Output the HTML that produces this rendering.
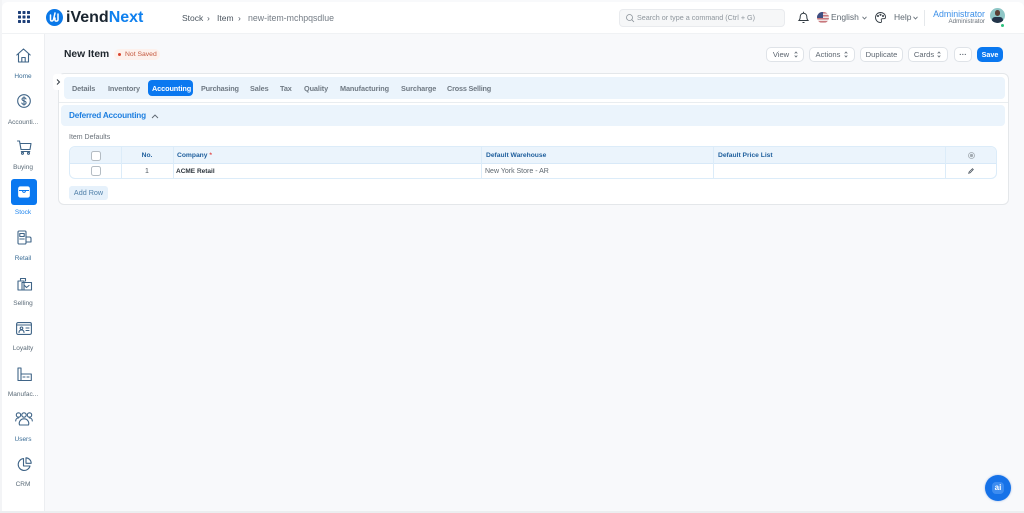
<!DOCTYPE html>
<html lang="en"><head><meta charset="utf-8"><title>New Item</title>
<style>
*{box-sizing:border-box}
html,body{margin:0;padding:0;width:1024px;height:513px;overflow:hidden;background:#f8f9fb;font-family:"Liberation Sans",sans-serif}
.a{position:absolute;white-space:nowrap}
.c{transform:translateX(-50%)}
.nav{color:#5b6b78;font-size:6.500px;line-height:9px;text-align:center;width:44px;left:1px}
.blue{color:#3b6d96}
svg{position:absolute;overflow:visible}
.ic{fill:none;stroke:#3f6487;stroke-width:1.100;stroke-linecap:round;stroke-linejoin:round}
.tab{top:83.500px;font-size:7.300px;letter-spacing:-.1px;line-height:10px;font-weight:700;color:#6f7983}
.btn{top:47px;height:15px;background:#fff;border:1px solid #dfe3e8;border-radius:5px;font-size:7.600px;line-height:13px;color:#5d6670;text-align:center}
.th{top:151px;font-size:6.700px;line-height:9px;font-weight:700;color:#1f5f9d}
.ln{background:#dcecf9}
.cb{width:10px;height:10px;border:1px solid #b4bcc3;border-radius:2.500px;background:#fff}
</style></head><body>

<!-- top bar -->
<div class="a" style="left:2px;top:2px;width:1022px;height:32px;background:#fff;border-radius:6px 6px 0 0;border-bottom:1px solid #f0f2f4"></div>
<svg style="left:18px;top:11px" width="12" height="12" fill="#1d3f78"><rect x="0" y="0" width="3" height="3" rx=".6"/><rect x="4.500" y="0" width="3" height="3" rx=".6"/><rect x="9" y="0" width="3" height="3" rx=".6"/><rect x="0" y="4.500" width="3" height="3" rx=".6"/><rect x="4.500" y="4.500" width="3" height="3" rx=".6"/><rect x="9" y="4.500" width="3" height="3" rx=".6"/><rect x="0" y="9" width="3" height="3" rx=".6"/><rect x="4.500" y="9" width="3" height="3" rx=".6"/><rect x="9" y="9" width="3" height="3" rx=".6"/></svg>
<svg style="left:46px;top:9px" width="17" height="17"><circle cx="8.500" cy="8.500" r="8.500" fill="#0a78e8"/><path d="M4.500 6v4.500c0 2 2.500 2 3 0l1.500-6.500M9 9v2c0 1.500 2.500 1.500 3 0V5" fill="none" stroke="#fff" stroke-width="1.500" stroke-linecap="round"/></svg>
<div class="a" style="left:66px;top:8px;font-size:16px;line-height:19px;font-weight:700;color:#1a2530">iVend<span style="color:#0f80ee">Next</span></div>
<div class="a" style="left:182px;top:13px;font-size:8.500px;line-height:10px;color:#4c5660">Stock</div>
<div class="a" style="left:207px;top:13px;font-size:8.500px;line-height:10px;color:#4c5660">&#8250;</div>
<div class="a" style="left:217px;top:13px;font-size:8.500px;line-height:10px;color:#4c5660">Item</div>
<div class="a" style="left:238px;top:13px;font-size:8.500px;line-height:10px;color:#4c5660">&#8250;</div>
<div class="a" style="left:248px;top:13px;font-size:8.800px;line-height:10px;color:#747c85">new-item-mchpqsdlue</div>

<div class="a" style="left:619px;top:9px;width:166px;height:18px;background:#f6f7f8;border:1px solid #e9ebee;border-radius:4px"></div>
<svg style="left:626px;top:14px" width="8" height="8" fill="none" stroke="#8b939a" stroke-width=".8"><circle cx="3.500" cy="3.500" r="3"/><path d="M5.800 5.800L8 8"/></svg>
<div class="a" style="left:637px;top:13px;font-size:7.200px;line-height:10px;color:#8d959c">Search or type a command (Ctrl + G)</div>
<svg style="left:798px;top:11px" width="11" height="13" fill="none" stroke="#333c44" stroke-width="1"><path d="M1 9.500c1-1 1.200-2 1.200-4a3.300 3.300 0 0 1 6.600 0c0 2 .2 3 1.200 4zM4.500 11.500h2M5.500 .8v1"/></svg>
<div class="a" style="left:817px;top:12px;width:12px;height:11px;border-radius:6px;background:repeating-linear-gradient(#c9777c 0 1.500px,#efe3e3 1.500px 3px);overflow:hidden"><div style="width:6px;height:5.500px;background:#3f4f82"></div></div>
<div class="a" style="left:831px;top:12px;font-size:8.500px;line-height:11px;color:#606a73">English</div>
<svg style="left:862px;top:16px" width="5" height="4" fill="none" stroke="#606a73" stroke-width=".8"><path d="M.5 .8L2.500 3L4.500 .8"/></svg>
<svg style="left:875px;top:12px" width="11" height="11" fill="none" stroke="#333c44" stroke-width=".9"><path d="M5.500 .5a5 5 0 1 0 0 10c1.500 0 1.200-1.500.8-2.200-.4-.9.300-1.600 1.200-1.600h1.600c1 0 1.400-.8 1.400-1.700 0-2.600-2.400-4.500-5-4.500z"/><circle cx="3" cy="4" r=".6"/><circle cx="5.500" cy="2.800" r=".6"/><circle cx="8" cy="4" r=".6"/></svg>
<div class="a" style="left:894px;top:12px;font-size:8.500px;line-height:11px;color:#606a73">Help</div>
<svg style="left:913px;top:16px" width="5" height="4" fill="none" stroke="#606a73" stroke-width=".8"><path d="M.5 .8L2.500 3L4.500 .8"/></svg>
<div class="a" style="left:924px;top:10px;width:1px;height:16px;background:#e5e8eb"></div>
<div class="a" style="right:39px;top:8.500px;font-size:8.800px;line-height:11px;color:#3b8fe8">Administrator</div>
<div class="a" style="right:39px;top:18px;font-size:6.200px;line-height:8px;color:#6a727a">Administrator</div>
<div class="a" style="left:990px;top:8px;width:15px;height:15px;border-radius:50%;background:#8fc6c6;overflow:hidden"><div style="position:absolute;left:5px;top:2px;width:5px;height:6px;border-radius:2.500px;background:#5b4036"></div><div style="position:absolute;left:2px;top:9px;width:11px;height:7px;border-radius:3px;background:#233449"></div></div>
<div class="a" style="left:1000px;top:23px;width:5px;height:5px;border-radius:50%;background:#2ec27e;border:.5px solid #fff"></div>

<!-- sidebar -->
<div class="a" style="left:2px;top:34px;width:43px;height:477px;background:#fff;border-right:1px solid #eceef1"></div>

<svg class="ic" style="left:16px;top:48px" width="15" height="15"><path d="M.8 7L7.500 1l6.700 6M2.500 5.800V14h10V5.800M5.800 14V9.500h3.400V14"/></svg>
<div class="a nav blue" style="top:72px">Home</div>
<svg class="ic" style="left:17px;top:94px" width="14" height="14"><circle cx="7" cy="7" r="6.300"/><path d="M9 5c-.3-1-1.100-1.300-2-1.300C5.800 3.700 5 4.300 5 5.200 5 7.300 9.100 6.500 9.100 8.800c0 1-1 1.600-2.100 1.600-1 0-1.900-.4-2.200-1.400M7 2.800v8.400" stroke-width="1"/></svg>
<div class="a nav" style="top:118px">Accounti...</div>
<svg class="ic" style="left:17px;top:140px" width="15" height="15"><path d="M.5 1h2l1.500 8.500h9l1-6H3M4.300 11.500h8.500"/><circle cx="5.500" cy="13.300" r="1"/><circle cx="11.500" cy="13.300" r="1"/></svg>
<div class="a nav" style="top:163px">Buying</div>
<div class="a" style="left:11px;top:179px;width:26px;height:26px;border-radius:3px;background:#0a78f0"></div>
<svg style="left:18px;top:186px" width="12" height="12" fill="none" stroke="#fff" stroke-width="1.300" stroke-linejoin="round"><rect x=".8" y="1" width="10.400" height="10" rx="1.500" fill="#fff"/><path d="M1 4.500h10M4.500 4.500c0 2.500 3 2.500 3 0" stroke="#0a78f0" stroke-width="1"/></svg>
<div class="a nav" style="top:208px;color:#1e84ee">Stock</div>
<svg class="ic" style="left:17px;top:230px" width="15" height="15"><rect x="1" y="1" width="8" height="13" rx="1"/><path d="M2.800 3.500h4.400v3H2.800zM2.800 9h4.400M9 7h3.500c1 0 1.500.6 1.500 1.500V12H9"/></svg>
<div class="a nav blue" style="top:254px">Retail</div>
<svg class="ic" style="left:17px;top:276px" width="15" height="15"><path d="M3.500 4V2.500h5V5M1 5h6V14H1zM5 6.500h9.500V14H5z"/><path d="M7.500 9.500l2 2 2.500-2"/></svg>
<div class="a nav" style="top:299px">Selling</div>
<svg class="ic" style="left:16px;top:322px" width="16" height="13"><rect x=".6" y=".6" width="14.800" height="11.800" rx="1.500"/><path d="M.6 3h14.800M3 10.500c0-2 1-2.500 2.500-2.500S8 8.500 8 10.500M10 6h3M10 8.500h3"/><circle cx="5.500" cy="6.300" r="1.300"/></svg>
<div class="a nav" style="top:344px">Loyalty</div>
<svg class="ic" style="left:17px;top:367px" width="15" height="14"><path d="M1 13.500V1h3v12.500zM4 7h10.300v6.500H1M6 10h2M10 10h2"/></svg>
<div class="a nav" style="top:390px">Manufac...</div>
<svg class="ic" style="left:15px;top:412px" width="18" height="14"><circle cx="3.500" cy="3" r="2.200"/><circle cx="9" cy="3" r="2.200"/><circle cx="14.500" cy="3" r="2.200"/><path d="M.7 9c0-2 1.300-3 2.800-3M17.300 9c0-2-1.300-3-2.800-3M4.500 13c-1-3 1-6.200 4.500-6.200s5.500 3.200 4.500 6.200z"/></svg>
<div class="a nav blue" style="top:435px">Users</div>
<svg class="ic" style="left:17px;top:457px" width="15" height="15"><path d="M6.500 1.500a6 6 0 1 0 6.500 7.500H6.500z"/><path d="M9 .8a5.500 5.500 0 0 1 5.200 5.500H9z"/></svg>
<div class="a nav" style="top:480px">CRM</div>

<!-- page head -->
<div class="a" style="left:64px;top:48px;font-size:10.300px;line-height:13px;font-weight:700;color:#1f272e">New Item</div>
<div class="a" style="left:114px;top:49px;width:46px;height:11px;border-radius:6px;background:#fdf1ec"></div>
<div class="a" style="left:118px;top:53px;width:3px;height:3px;border-radius:50%;background:#d9442f"></div>
<div class="a" style="left:125px;top:50px;font-size:6.800px;line-height:9px;color:#c4593f">Not Saved</div>

<div class="a btn" style="left:766px;width:38px;padding-right:8px">View</div>
<div class="a btn" style="left:809px;width:46px;padding-right:8px">Actions</div>
<div class="a btn" style="left:860px;width:43px">Duplicate</div>
<div class="a btn" style="left:908px;width:40px;padding-right:8px">Cards</div>
<div class="a btn" style="left:954px;width:18px;line-height:13px;font-weight:700">&#183;&#183;&#183;</div>
<div class="a btn" style="left:977px;width:26px;background:#0a78f0;border-color:#0a78f0;color:#fff;font-weight:700;font-size:7.200px">Save</div>
<svg style="left:794px;top:51px" width="4" height="7" fill="none" stroke="#5d6670" stroke-width=".8"><path d="M.7 2.500L2 1l1.300 1.500M.7 4.500L2 6l1.300-1.500"/></svg>
<svg style="left:844px;top:51px" width="4" height="7" fill="none" stroke="#5d6670" stroke-width=".8"><path d="M.7 2.500L2 1l1.300 1.500M.7 4.500L2 6l1.300-1.500"/></svg>
<svg style="left:937px;top:51px" width="4" height="7" fill="none" stroke="#5d6670" stroke-width=".8"><path d="M.7 2.500L2 1l1.300 1.500M.7 4.500L2 6l1.300-1.500"/></svg>

<!-- card -->
<div class="a" style="left:58px;top:73px;width:951px;height:132px;background:#fff;border:1px solid #e4e7ea;border-radius:6px"></div>
<div class="a" style="left:53px;top:74px;width:11px;height:16px;background:#fff;border-radius:3px"></div>
<svg style="left:56px;top:79px" width="5" height="6" fill="none" stroke="#333c44" stroke-width="1"><path d="M1 .5L3.500 3L1 5.500"/></svg>
<div class="a" style="left:64px;top:77px;width:941px;height:22px;background:#ebf4fc;border-radius:4px"></div>
<div class="a" style="left:59px;top:101.500px;width:949px;height:1px;background:#e9edf0"></div>
<div class="a" style="left:148px;top:80px;width:45px;height:16px;background:#0a78f0;border-radius:4px"></div>
<div class="a tab" style="left:72px">Details</div>
<div class="a tab" style="left:108px">Inventory</div>
<div class="a tab" style="left:152px;color:#fff">Accounting</div>
<div class="a tab" style="left:201px;letter-spacing:-.2px">Purchasing</div>
<div class="a tab" style="left:250px">Sales</div>
<div class="a tab" style="left:280px">Tax</div>
<div class="a tab" style="left:304px">Quality</div>
<div class="a tab" style="left:340px">Manufacturing</div>
<div class="a tab" style="left:401px">Surcharge</div>
<div class="a tab" style="left:447px;letter-spacing:-.2px">Cross Selling</div>

<div class="a" style="left:61px;top:105px;width:944px;height:21px;background:#ebf4fc;border-radius:4px"></div>
<div class="a" style="left:69px;top:110px;font-size:8.200px;letter-spacing:-.2px;line-height:12px;font-weight:700;color:#1e7fe0">Deferred Accounting</div>
<svg style="left:151px;top:114px" width="8" height="5" fill="none" stroke="#5d6670" stroke-width=".9"><path d="M1 4L4 1l3 3"/></svg>
<div class="a" style="left:69px;top:133px;font-size:7px;line-height:9px;color:#6a727a">Item Defaults</div>

<!-- table -->
<div class="a" style="left:69px;top:146px;width:928px;height:33px;border:1px solid #dcecf9;border-radius:6px;background:#fff;overflow:hidden"><div style="height:17px;background:#ebf4fc;border-bottom:1px solid #d8e9f8"></div></div>
<div class="a ln" style="left:121px;top:146px;width:1px;height:33px"></div>
<div class="a ln" style="left:173px;top:146px;width:1px;height:33px"></div>
<div class="a ln" style="left:481px;top:146px;width:1px;height:33px"></div>
<div class="a ln" style="left:713px;top:146px;width:1px;height:33px"></div>
<div class="a ln" style="left:945px;top:146px;width:1px;height:33px"></div>
<div class="a cb" style="left:91px;top:151px"></div>
<div class="a cb" style="left:91px;top:166px"></div>
<div class="a th c" style="left:147px">No.</div>
<div class="a th" style="left:177px">Company <span style="color:#e24c4c">*</span></div>
<div class="a th" style="left:486px">Default Warehouse</div>
<div class="a th" style="left:718px">Default Price List</div>
<svg style="left:968px;top:152px" width="7" height="7" fill="none" stroke="#a2aab1" stroke-width=".8"><circle cx="3.500" cy="3.500" r="3"/><circle cx="3.500" cy="3.500" r="1.200" fill="#a2aab1"/></svg>
<div class="a c" style="left:147px;top:166.500px;font-size:7px;line-height:9px;color:#4c5660">1</div>
<div class="a" style="left:176px;top:167px;font-size:6.500px;line-height:9px;font-weight:700;color:#2b333b">ACME Retail</div>
<div class="a" style="left:485px;top:167px;font-size:7px;line-height:9px;color:#5f6870">New York Store - AR</div>
<svg style="left:968px;top:168px" width="6" height="6" fill="none" stroke="#4c5660" stroke-width=".8"><path d="M.7 5.300l.5-1.500L4.500.7l.8.8L2.200 4.800z"/></svg>
<div class="a" style="left:69px;top:186px;width:39px;height:14px;background:#e6f1fb;border-radius:3px;font-size:7.200px;line-height:14px;text-align:center;color:#4f7fa8">Add Row</div>

<!-- AI button -->
<div class="a" style="left:985px;top:475px;width:26px;height:26px;border-radius:50%;background:#1672e8;box-shadow:0 0 2px rgba(20,90,200,.4)"></div>
<div class="a" style="left:992px;top:482px;width:12px;height:12px;border-radius:4px;background:#3d8cf0"></div>
<div class="a" style="left:985px;top:475px;width:26px;text-align:center;font-size:8px;line-height:26px;font-weight:700;color:#fff">ai</div>

<!-- window edges -->
<div class="a" style="left:0;top:0;width:2px;height:513px;background:#f3f4f6"></div>
<div class="a" style="left:0;top:511px;width:1024px;height:2px;background:#eceef0"></div>
</body></html>
